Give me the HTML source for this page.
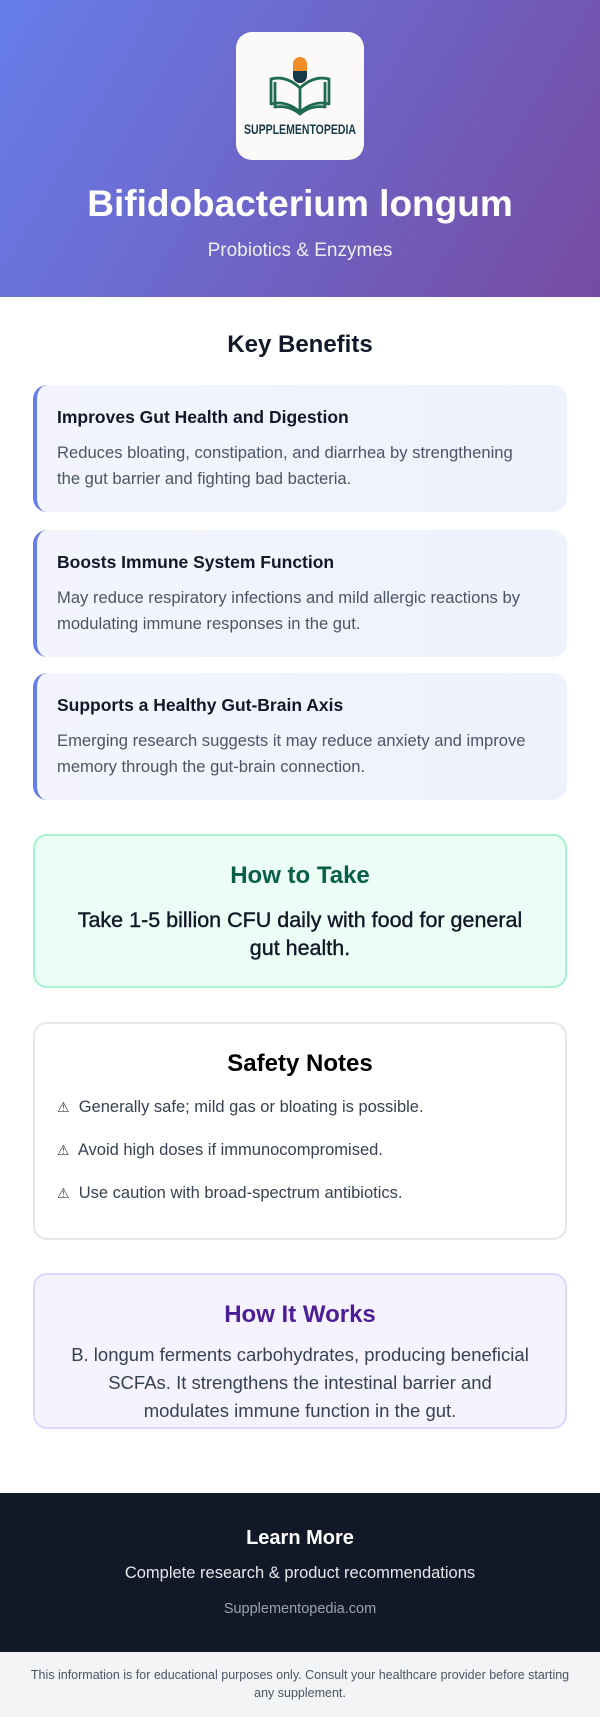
<!DOCTYPE html>
<html><head><meta charset="utf-8"><style>
*{box-sizing:border-box;margin:0;padding:0}
body{width:600px;height:1717px;font-family:"Liberation Sans",sans-serif;background:#fff;color:#1f2937;position:relative;overflow:hidden}
.hdr{position:absolute;left:0;top:0;width:600px;height:297px;background:linear-gradient(120deg,#667eea,#764ba2);text-align:center;color:#fff}
.logo{position:absolute;left:236px;top:32px;width:128px;height:128px;background:#fcfaf8;border-radius:16px}
.hdr h1{position:absolute;top:183px;width:100%;font-size:37px;font-weight:bold}
.hdr p{position:absolute;top:240px;width:100%;font-size:19px;color:#eee}
.abs{position:absolute}
.kb{top:331px;width:100%;text-align:center;font-size:24px;font-weight:bold;color:#111827}
.card{left:33px;width:534px;height:127px;background:linear-gradient(90deg,#f3f4ff,#eef2fc);border-left:4px solid #667eea;border-radius:14px;padding:22px 28px 22px 20px}
.card h3{font-size:17.5px;color:#111827;margin-bottom:12px}
.card p{font-size:16.6px;line-height:26px;color:#4b5563}
.box{left:33px;width:534px;border-radius:14px;text-align:center}
.box h2{font-size:24px;font-weight:bold}
</style></head><body>
<div class="hdr">
<div class="logo">
<svg width="128" height="128" viewBox="0 0 128 128">
<rect x="57" y="25" width="14" height="26" rx="7" fill="#f28c28"/>
<path d="M57 39h14v5a7 7 0 0 1-14 0z" fill="#163a4a"/>
<g fill="none" stroke="#1f6b4f" stroke-width="2.8" stroke-linejoin="round">
<path d="M64 80 Q50 68 35 72 V47 Q50 43 64 56 Q78 43 93 47 V72 Q78 68 64 80z"/>
<path d="M39 50 V75 Q53 73 64 82 Q75 73 89 75 V50"/>
<path d="M64 56 V80"/>
</g>
<text x="64" y="102" text-anchor="middle" font-family="Liberation Sans" font-weight="bold" font-size="14" fill="#163a4a" textLength="112" lengthAdjust="spacingAndGlyphs">SUPPLEMENTOPEDIA</text>
</svg>
</div>
<h1>Bifidobacterium longum</h1>
<p>Probiotics &amp; Enzymes</p>
</div>
<div class="abs kb">Key Benefits</div>
<div class="abs card" style="top:385px"><h3>Improves Gut Health and Digestion</h3><p>Reduces bloating, constipation, and diarrhea by strengthening the gut barrier and fighting bad bacteria.</p></div>
<div class="abs card" style="top:530px"><h3>Boosts Immune System Function</h3><p>May reduce respiratory infections and mild allergic reactions by modulating immune responses in the gut.</p></div>
<div class="abs card" style="top:673px"><h3>Supports a Healthy Gut-Brain Axis</h3><p>Emerging research suggests it may reduce anxiety and improve memory through the gut-brain connection.</p></div>
<div class="abs box" style="top:834px;height:154px;background:#ecfdf5;border:2px solid #a7f3d0;padding:26px 34px">
<h2 style="color:#065f46">How to Take</h2>
<p style="font-size:21.5px;line-height:28px;color:#111827;margin-top:16px;-webkit-text-stroke:0.4px #111827">Take 1-5 billion CFU daily with food for general gut health.</p></div>
<div class="abs box" style="top:1022px;height:218px;background:#fff;border:2px solid #e5e7eb;padding:26px 22px 0">
<h2 style="color:#000">Safety Notes</h2>
<div style="text-align:left;font-size:16.5px;color:#374151;margin-top:20px">
<p style="margin-bottom:24px"><span style="font-size:14px">⚠</span>&nbsp; Generally safe; mild gas or bloating is possible.</p>
<p style="margin-bottom:24px"><span style="font-size:14px">⚠</span>&nbsp; Avoid high doses if immunocompromised.</p>
<p><span style="font-size:14px">⚠</span>&nbsp; Use caution with broad-spectrum antibiotics.</p></div></div>
<div class="abs box" style="top:1273px;height:156px;background:#f5f3ff;border:2px solid #ddd6fe;padding:26px 32px">
<h2 style="color:#4c1d95">How It Works</h2>
<p style="font-size:18.5px;line-height:28px;color:#374151;margin-top:12px">B. longum ferments carbohydrates, producing beneficial SCFAs. It strengthens the intestinal barrier and modulates immune function in the gut.</p></div>
<div class="abs" style="top:1493px;left:0;width:600px;height:159px;background:#111827;text-align:center;color:#fff">
<div style="margin-top:34px;font-size:20px;font-weight:bold">Learn More</div>
<div style="margin-top:14px;font-size:16.5px;color:#e5e7eb">Complete research &amp; product recommendations</div>
<div style="margin-top:18px;font-size:14.5px;color:#9ca3af">Supplementopedia.com</div></div>
<div class="abs" style="top:1652px;left:0;width:600px;height:65px;background:#f3f4f6;text-align:center;font-size:12.5px;line-height:18px;color:#4b5563;padding:14px 22px">This information is for educational purposes only. Consult your healthcare provider before starting any supplement.</div>
</body></html>
